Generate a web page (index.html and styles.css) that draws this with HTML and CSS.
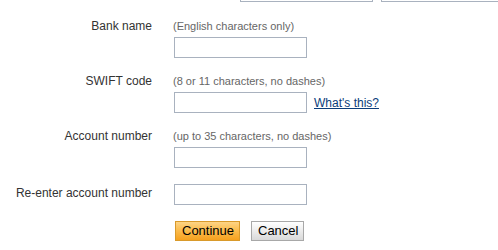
FILE: index.html
```html
<!DOCTYPE html>
<html lang="en">
<head>
    <meta charset="UTF-8">
    <title>Bank account</title>
    <link rel="stylesheet" href="styles.css">
</head>
<body>
    <form class="bank-form">
        <div class="prev-row">
            <input type="text" class="field prev-field">
            <input type="text" class="field prev-field wide">
        </div>

        <div class="group">
            <label class="label" for="bankName">Bank name</label>
            <div class="control">
                <div class="hint">(English characters only)</div>
                <input type="text" id="bankName" class="field">
            </div>
        </div>

        <div class="group">
            <label class="label" for="swift">SWIFT code</label>
            <div class="control">
                <div class="hint">(8 or 11 characters, no dashes)</div>
                <div class="with-link">
                    <input type="text" id="swift" class="field">
                    <a href="#" class="help-link">What's this?</a>
                </div>
            </div>
        </div>

        <div class="group">
            <label class="label" for="account">Account number</label>
            <div class="control">
                <div class="hint">(up to 35 characters, no dashes)</div>
                <input type="text" id="account" class="field">
            </div>
        </div>

        <div class="group inline">
            <label class="label" for="account2">Re-enter account number</label>
            <div class="control">
                <input type="text" id="account2" class="field">
            </div>
        </div>

        <div class="actions">
            <button type="button" class="btn btn-primary">Continue</button>
            <button type="button" class="btn btn-secondary">Cancel</button>
        </div>
    </form>
</body>
</html>
```

FILE: styles.css
```css
* {
    box-sizing: border-box;
}

body {
    margin: 0;
    background: #fff;
    font-family: "Liberation Sans", Arial, sans-serif;
    font-size: 12px;
    color: #333;
    overflow: hidden;
}

.prev-row {
    display: flex;
    gap: 8px;
    padding-left: 240px;
    margin-top: -19px;
    margin-bottom: 17px;
}

.field {
    display: block;
    width: 133px;
    height: 21px;
    border: 1px solid #a9b2bf;
    background: #fff;
    padding: 1px 3px;
    font: inherit;
    margin: 0;
}

.prev-field.wide {
    width: 140px;
}

.group {
    display: grid;
    grid-template-columns: 152px 1fr;
    column-gap: 22px;
    margin-bottom: 16px;
}

.label {
    text-align: right;
    line-height: 14px;
    white-space: nowrap;
}

.group.inline .label {
    padding-top: 2px;
}

.hint {
    font-size: 11px;
    line-height: 14px;
    color: #666;
    margin-bottom: 4px;
    margin-left: -1px;
}

.with-link {
    display: flex;
    align-items: center;
    gap: 7px;
}

.help-link {
    color: #0b3d7a;
    text-decoration: underline;
    padding-top: 1px;
}

.actions {
    display: flex;
    gap: 11px;
    padding-left: 175px;
    padding-top: 0;
}

.btn {
    height: 20px;
    padding: 0 6px;
    font-family: "Liberation Sans", Arial, sans-serif;
    font-size: 13px;
    color: #000;
    cursor: pointer;
    line-height: 18px;
}

.btn-primary {
    width: 65px;
    border: 1px solid #d99a2b;
    background: linear-gradient(#fdd486 0%, #fbbd4f 45%, #f6a11e 100%);
}

.btn-secondary {
    width: 53px;
    border: 1px solid #a8a8a8;
    background: linear-gradient(#ffffff 0%, #ececec 50%, #d9d9d9 100%);
}
```
